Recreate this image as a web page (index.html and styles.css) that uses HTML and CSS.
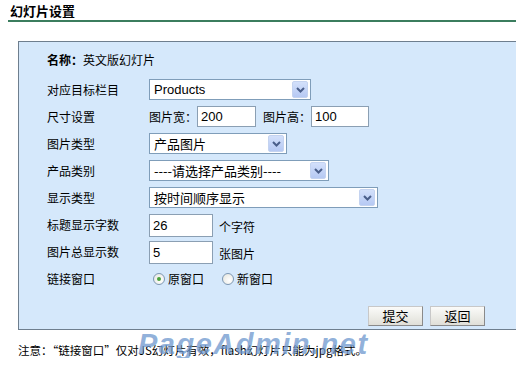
FILE: index.html
```html
<!DOCTYPE html>
<html lang="zh-CN">
<head>
    <meta charset="UTF-8">
    <title>幻灯片设置</title>
    <link rel="stylesheet" href="styles.css">
</head>
<body>
    <div class="page-title">幻灯片设置</div>

    <div class="panel">
        <div class="name-row"><b>名称：</b>英文版幻灯片</div>

        <div class="form-row">
            <div class="label">对应目标栏目</div>
            <div class="select w-162"><span>Products</span><i class="arrow"><svg width="9" height="6" viewBox="0 0 9 6"><path d="M1 1 L4.5 4.5 L8 1" fill="none" stroke="#4a5e8a" stroke-width="2"/></svg></i></div>
        </div>

        <div class="form-row">
            <div class="label">尺寸设置</div>
            <span class="sub-label">图片宽：</span>
            <div class="input w-59">200</div>
            <span class="sub-label gap">图片高：</span>
            <div class="input w-58">100</div>
        </div>

        <div class="form-row">
            <div class="label">图片类型</div>
            <div class="select w-138 cjk"><span>产品图片</span><i class="arrow"><svg width="9" height="6" viewBox="0 0 9 6"><path d="M1 1 L4.5 4.5 L8 1" fill="none" stroke="#4a5e8a" stroke-width="2"/></svg></i></div>
        </div>

        <div class="form-row">
            <div class="label">产品类别</div>
            <div class="select w-180 cjk"><span>----请选择产品类别----</span><i class="arrow"><svg width="9" height="6" viewBox="0 0 9 6"><path d="M1 1 L4.5 4.5 L8 1" fill="none" stroke="#4a5e8a" stroke-width="2"/></svg></i></div>
        </div>

        <div class="form-row">
            <div class="label">显示类型</div>
            <div class="select w-229 cjk"><span>按时间顺序显示</span><i class="arrow"><svg width="9" height="6" viewBox="0 0 9 6"><path d="M1 1 L4.5 4.5 L8 1" fill="none" stroke="#4a5e8a" stroke-width="2"/></svg></i></div>
        </div>

        <div class="form-row">
            <div class="label">标题显示字数</div>
            <div class="input w-64 tall">26</div>
            <span class="unit">个字符</span>
        </div>

        <div class="form-row">
            <div class="label">图片总显示数</div>
            <div class="input w-64 tall">5</div>
            <span class="unit">张图片</span>
        </div>

        <div class="form-row">
            <div class="label">链接窗口</div>
            <label class="radio"><i class="dot checked"></i>原窗口</label>
            <label class="radio"><i class="dot"></i>新窗口</label>
        </div>

        <div class="buttons">
            <button class="btn">提交</button>
            <button class="btn">返回</button>
        </div>
    </div>

    <div class="note">
        注意：“链接窗口”仅对JS幻灯片有效，flash幻灯片只能为jpg格式。
        <span class="watermark">PageAdmin.net</span>
    </div>
</body>
</html>
```

FILE: styles.css
```css
* {
    margin: 0;
    padding: 0;
    box-sizing: border-box;
}

body {
    background: #fff;
    color: #000;
    font-family: "Noto Sans CJK SC", "Liberation Sans", sans-serif;
    font-size: 12px;
}

.page-title {
    margin-left: 8px;
    padding: 3px 0 0 2px;
    height: 22px;
    font-size: 13px;
    font-weight: bold;
    line-height: 16px;
    border-bottom: 2px solid #3b7d5e;
}

.panel {
    margin: 19px 0 0 18px;
    padding: 4px 0 3px 28px;
    background: #d5e8fb;
    border: 1px solid #6e7e8e;
    border-right: none;
}

.name-row {
    height: 27px;
    line-height: 27px;
    margin-bottom: 3px;
}

.form-row {
    display: flex;
    align-items: center;
    height: 27px;
}

.label {
    width: 102px;
    flex-shrink: 0;
}

.select {
    display: flex;
    align-items: center;
    justify-content: space-between;
    height: 21px;
    padding: 0 2px 0 4px;
    background: #fff;
    border: 1px solid #7f9db9;
    font-family: "Liberation Sans", "Noto Sans CJK SC", sans-serif;
    font-size: 13px;
}

.select.cjk {
    font-family: "Noto Sans CJK SC", sans-serif;
}

.arrow {
    display: flex;
    align-items: center;
    justify-content: center;
    width: 16px;
    height: 17px;
    background: linear-gradient(#d3e0fb, #b6c9f3);
    border: 1px solid #c4d3f0;
    border-radius: 2px;
}

.w-162 { width: 162px; }
.w-138 { width: 138px; }
.w-180 { width: 180px; }
.w-229 { width: 229px; }
.w-59 { width: 59px; }
.w-58 { width: 58px; }
.w-64 { width: 64px; }

.sub-label {
    width: 48px;
}

.sub-label.gap {
    margin-left: 7px;
}

.input {
    height: 21px;
    padding: 0 3px;
    background: #fff;
    border: 1px solid #8b9fb3;
    font-family: "Liberation Sans", sans-serif;
    font-size: 13px;
    line-height: 19px;
}

.input.tall {
    height: 23px;
    line-height: 21px;
    margin-top: 2px;
}

.unit {
    margin-left: 6px;
    margin-top: 4px;
}

.radio {
    display: flex;
    align-items: center;
    margin-left: 4px;
    margin-right: 14px;
}

.dot {
    width: 12px;
    height: 12px;
    margin-right: 3px;
    border-radius: 50%;
    border: 1px solid #7d97b3;
    background: radial-gradient(circle at 65% 65%, #fff, #e4e4dc);
    position: relative;
}

.dot.checked::after {
    content: '';
    position: absolute;
    left: 3px;
    top: 3px;
    width: 4px;
    height: 4px;
    border-radius: 50%;
    background: #4aa23c;
}

.buttons {
    display: flex;
    gap: 7px;
    margin: 14px 0 0 321px;
}

.btn {
    width: 55px;
    height: 20px;
    background: linear-gradient(#fbfbf9, #e0dfd8);
    border: 1px solid #8a8a8a;
    border-top-color: #c8c8c8;
    border-left-color: #c8c8c8;
    font-family: "Noto Sans CJK SC", sans-serif;
    font-size: 13px;
    line-height: 16px;
    color: #000;
}

.note {
    position: relative;
    margin: 12px 0 0 18px;
    font-size: 11.5px;
    line-height: 16px;
}

.watermark {
    position: absolute;
    left: 120px;
    top: -6px;
    font-family: "Liberation Sans", sans-serif;
    font-size: 29px;
    font-weight: bold;
    font-style: italic;
    letter-spacing: 1.5px;
    color: rgba(110, 152, 206, 0.75);
}
```
